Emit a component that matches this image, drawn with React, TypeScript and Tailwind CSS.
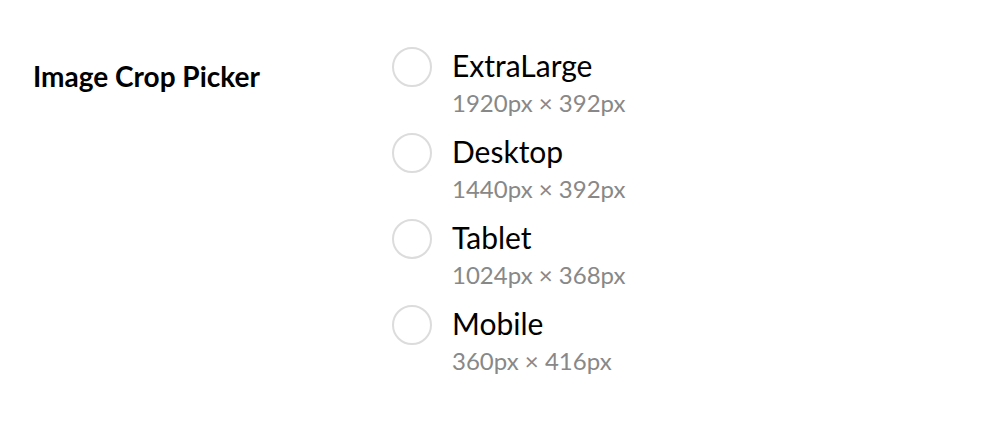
const options = [
  { name: "ExtraLarge", size: "1920px × 392px" },
  { name: "Desktop", size: "1440px × 392px" },
  { name: "Tablet", size: "1024px × 368px" },
  { name: "Mobile", size: "360px × 416px" },
];

export default function App() {
  return (
    <div className="flex min-h-[422px] bg-white px-[33px] pt-[47px] font-['Lato',sans-serif]">
      <div className="w-[359px] shrink-0 pt-[12px] text-[28px] font-bold leading-[34px] text-black">
        Image Crop Picker
      </div>
      <div className="flex flex-col gap-[10px]">
        {options.map((o) => (
          <label key={o.name} className="flex cursor-pointer gap-[20px]">
            <span className="h-[40px] w-[40px] shrink-0 rounded-full border-2 border-[#dcdcdc]" />
            <span className="flex flex-col">
              <span className="text-[30px] leading-[36px] text-black">{o.name}</span>
              <span className="text-[24px] leading-[40px] text-[#888888]">{o.size}</span>
            </span>
          </label>
        ))}
      </div>
    </div>
  );
}
